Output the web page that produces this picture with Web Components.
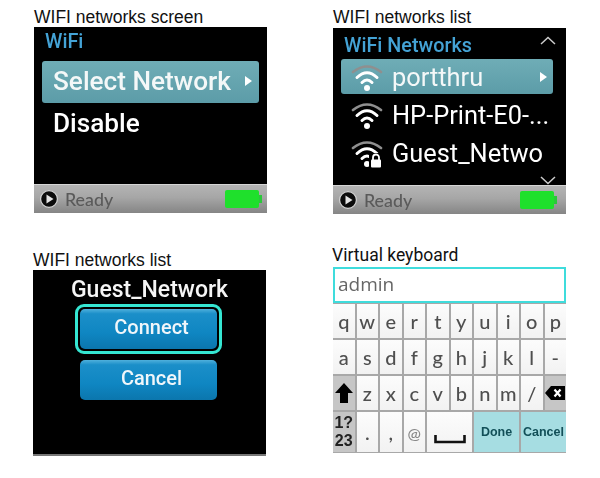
<!DOCTYPE html>
<html>
<head>
<meta charset="utf-8">
<title>WiFi screens</title>
<style>
    html, body { margin: 0; background: #fff; }
    body { width: 600px; height: 478px; overflow: hidden; font-family: "Liberation Sans", sans-serif; }
    .page {
        display: grid;
        grid-template-columns: 233px 233px;
        column-gap: 67px;
        padding-left: 33px;
    }
</style>
</head>
<body>
<div class="page">
    <shot-panel label="WIFI networks screen" style="--top: 7px; --label-h: 20px; --x: 1px">
        <wifi-screen heading="WiFi" style="--head: 34px; --head-lh: 30px; --head-pad: 3px; --pad-r: 8px; --batt-r: 4px; margin: 0 -1px 0 1px">
            <menu-row size="big" arrow>Select Network</menu-row>
            <menu-row size="big" plain>Disable</menu-row>
        </wifi-screen>
    </shot-panel>
    <shot-panel label="WIFI networks list" style="--top: 7px; --label-h: 21px">
        <wifi-screen heading="WiFi Networks" scroll style="--head: 31px; --head-lh: 36px; --head-pad: 3px; --pad-r: 13px; --batt-r: 8px">
            <menu-row arrow><wifi-icon slot="icon"></wifi-icon>portthru</menu-row>
            <menu-row plain><wifi-icon slot="icon"></wifi-icon>HP-Print-E0-...</menu-row>
            <menu-row plain><wifi-icon slot="icon" locked></wifi-icon>Guest_Netwo</menu-row>
        </wifi-screen>
    </shot-panel>
    <shot-panel label="WIFI networks list" style="--top: 7px; --label-h: 20px">
        <connect-dialog network="Guest_Network"></connect-dialog>
    </shot-panel>
    <shot-panel label="Virtual keyboard" style="--top: 0px; --label-h: 24px; --label-font: Roboto; --x: -1px">
        <virtual-keyboard value="admin"></virtual-keyboard>
    </shot-panel>
</div>

<script>
class ShotPanel extends HTMLElement {
    constructor() {
        super();
        this.shadow = this.attachShadow({mode: "open"});
        this.shadow.innerHTML = `
        <style>
            :host { display: block; padding-top: var(--top, 0); height: 243px; box-sizing: border-box; }
            .label {
                height: var(--label-h, 20px);
                font: 17.5px/var(--label-h, 20px) var(--label-font, "Liberation Sans"), sans-serif;
                color: #111;
                margin-left: var(--x, 0);
                white-space: nowrap;
            }
        </style>
        <div class="label"></div>
        <slot></slot>`;
    }
    connectedCallback() {
        this.shadow.querySelector('.label').textContent = this.getAttribute('label');
    }
}

class WifiScreen extends HTMLElement {
    constructor() {
        super();
        this.shadow = this.attachShadow({mode: "open"});
        this.shadow.innerHTML = `
        <style>
            :host { display: flex; flex-direction: column; height: 186px; background: #000; position: relative; overflow: hidden; }
            .main { flex: 1; padding: 0 var(--pad-r, 12px) 0 8px; filter: blur(.4px); }
            h1 {
                margin: 0;
                height: var(--head, 32px);
                font: 500 19.8px/var(--head-lh, 36px) "Roboto", sans-serif;
                color: #44a3d6;
                padding-left: var(--head-pad, 3px);
            }
            .chev { position: absolute; right: 10px; width: 16px; height: 9px; display: none; }
            :host([scroll]) .chev { display: block; }
            .up { top: 8px; }
            .down { top: 148px; }
        </style>
        <div class="main">
            <h1></h1>
            <slot></slot>
        </div>
        <svg class="chev up" viewBox="0 0 16 9"><path d="M1 8L8 1.5L15 8" fill="none" stroke="#ccc" stroke-width="1.5"/></svg>
        <svg class="chev down" viewBox="0 0 16 9"><path d="M1 1L8 7.5L15 1" fill="none" stroke="#ccc" stroke-width="1.5"/></svg>
        <status-bar></status-bar>`;
    }
    connectedCallback() {
        this.shadow.querySelector('h1').textContent = this.getAttribute('heading');
    }
}

class MenuRow extends HTMLElement {
    constructor() {
        super();
        this.shadow = this.attachShadow({mode: "open"});
        this.shadow.innerHTML = `
        <style>
            :host {
                display: flex;
                align-items: center;
                gap: 9px;
                height: 35px;
                padding: 0 6px 0 10px;
                margin-bottom: 3px;
                background: linear-gradient(#6fadb6, #5c9ca8);
                border-radius: 3px;
                color: #f4f8f8;
                font: 25.4px "Roboto", sans-serif;
                white-space: nowrap;
                position: relative;
            }
            :host([plain]) { background: none; color: #fff; }
            :host([size="big"]) { height: 42px; box-sizing: border-box; font-size: 26.2px; font-weight: 500; padding: 0 7px 2px 11px; margin-bottom: 0; }
            .text { flex: 1; }
            .arrow { display: none; width: 0; height: 0; border-left: 7px solid #fff; border-top: 5px solid transparent; border-bottom: 5px solid transparent; }
            :host([arrow]) .arrow { display: block; }
        </style>
        <slot name="icon"></slot>
        <span class="text"><slot></slot></span>
        <span class="arrow"></span>`;
    }
}

class WifiIcon extends HTMLElement {
    constructor() {
        super();
        this.shadow = this.attachShadow({mode: "open"});
        this.shadow.innerHTML = `
        <style>
            :host { display: block; width: 32px; height: 30px; flex: none; }
            svg { display: block; }
        </style>
        <svg width="32" height="30" viewBox="0 0 32 30" fill="none" stroke-linecap="round">
            <path d="M2 10Q16 -1 30 10" stroke="#8f8f8f" stroke-width="2.6"/>
            <path d="M6 15.5Q16 6 26 15.5" stroke="#fff" stroke-width="3"/>
            <path d="M11 20.5Q16 15.5 21 20.5" stroke="#fff" stroke-width="3"/>
            <circle cx="16" cy="26" r="3" fill="#fff"/>
            <g class="lock" display="none">
                <rect x="18" y="15" width="14" height="16" fill="#000"/>
                <path d="M22 22v-2.5a3 3 0 0 1 6 0V22" stroke="#fff" stroke-width="1.8"/>
                <rect x="20" y="21.5" width="10" height="8" rx="1" fill="#fff"/>
            </g>
        </svg>`;
    }
    connectedCallback() {
        if (this.hasAttribute('locked')) {
            this.shadow.querySelector('.lock').setAttribute('display', 'inline');
        }
    }
}

class StatusBar extends HTMLElement {
    constructor() {
        super();
        this.shadow = this.attachShadow({mode: "open"});
        this.shadow.innerHTML = `
        <style>
            :host {
                display: flex;
                align-items: center;
                height: 29px;
                box-sizing: border-box;
                padding: 0 var(--batt-r, 7px) 0 5px;
                border-top: 1px solid #d5d5d5;
                background: linear-gradient(#b4b4b4, #a6a6a6 45%, #858585);
                filter: blur(.4px);
            }
            .text { flex: 1; margin-left: 6px; font: 500 17.8px "Lato", sans-serif; color: #5a5a5a; }
        </style>
        <svg width="20" height="20" viewBox="0 0 20 20">
            <circle cx="10" cy="10" r="8.4" fill="#0c0c0c" stroke="#d6d6d6" stroke-width="1.2"/>
            <path d="M7.5 5.6L14.5 10L7.5 14.4Z" fill="#e4e4e4"/>
        </svg>
        <span class="text">Ready</span>
        <svg width="38" height="20" viewBox="0 0 38 20">
            <rect x="0" y="1" width="34" height="18" rx="2" fill="#1fe02c"/>
            <rect x="34" y="6" width="3" height="8" fill="#2bc83a"/>
        </svg>`;
    }
}

class ConnectDialog extends HTMLElement {
    constructor() {
        super();
        this.shadow = this.attachShadow({mode: "open"});
        this.shadow.innerHTML = `
        <style>
            :host {
                display: flex;
                flex-direction: column;
                align-items: center;
                height: 186px;
                box-sizing: border-box;
                background: #000;
                border-bottom: 2px solid #777;
            }
            .name {
                height: 34px;
                font: 500 23px/40px "Roboto", sans-serif;
                color: #f5f5f5;
                filter: blur(.4px);
            }
            .stack { display: flex; flex-direction: column; align-items: center; gap: 6px; }
        </style>
        <div class="name"></div>
        <div class="stack">
            <glossy-button focused>Connect</glossy-button>
            <glossy-button>Cancel</glossy-button>
        </div>`;
    }
    connectedCallback() {
        this.shadow.querySelector('.name').textContent = this.getAttribute('network');
    }
}

class GlossyButton extends HTMLElement {
    constructor() {
        super();
        this.shadow = this.attachShadow({mode: "open"});
        this.shadow.innerHTML = `
        <style>
            :host { display: block; padding: 0; border-radius: 7px; margin-right: 2px; }
            :host([focused]) { padding: 2px; border: 3px solid #35e6d2; background: #000; border-radius: 9px; }
            .face {
                box-sizing: border-box;
                width: 137px;
                height: 40px;
                padding-left: 6px;
                border-radius: 5px;
                background: linear-gradient(#4fb0dc 0, #1b8fc9 12%, #0f86c2 60%, #0b76ad);
                color: #f0f6fa;
                font: 500 20px/37px "Roboto", sans-serif;
                text-align: center;
                filter: blur(.4px);
            }
        </style>
        <div class="face"><slot></slot></div>`;
    }
}

class KbKey extends HTMLElement {
    constructor() {
        super();
        this.shadow = this.attachShadow({mode: "open"});
        this.shadow.innerHTML = `
        <style>
            :host {
                display: flex;
                align-items: center;
                justify-content: center;
                background: linear-gradient(#fcfcfc, #f2f2f2);
                color: #4f4f4f;
                font: 500 20px "Lato", sans-serif;
                min-width: 0;
                overflow: hidden;
            }
            :host([wide]) { grid-column: span 2; }
            :host([mod]) { background: #c6c6c6; color: #000; }
            :host([action]) {
                background: #a6dde2;
                color: #124f58;
                font: bold 12.5px "Liberation Sans", sans-serif;
            }
        </style>
        <slot></slot>`;
    }
}

class VirtualKeyboard extends HTMLElement {
    constructor() {
        super();
        this.shadow = this.attachShadow({mode: "open"});
        const letters = (s) => [...s].map(c => `<kb-key>${c}</kb-key>`).join('');
        this.shadow.innerHTML = `
        <style>
            :host { display: block; height: 186px; filter: blur(.4px); }
            .field {
                height: 36px;
                box-sizing: border-box;
                border: 2px solid #3fdcdc;
                padding-left: 3px;
                font: 19px/30px "Open Sans", sans-serif;
                color: #666;
            }
            .keys {
                display: grid;
                grid-template-columns: repeat(10, 1fr);
                grid-template-rows: 34px 34px 34px 40px;
                gap: 2px;
                height: 150px;
                box-sizing: border-box;
                padding: 1px 0 2px;
                background: #a8a8a8;
            }
            .stack { font: bold 16px/18px "Liberation Sans", sans-serif; color: #222; text-align: center; }
            .at { font-size: 16px; color: #888; }
            .space { margin-top: 13px; }
        </style>
        <div class="field"></div>
        <div class="keys">
            ${letters('qwertyuiop')}
            ${letters('asdfghjkl-')}
            <kb-key mod><svg width="20" height="22" viewBox="0 0 20 22"><path d="M10 1L19 11H14V21H6V11H1Z" fill="#000"/></svg></kb-key>
            ${letters('zxcvbnm/')}
            <kb-key mod><svg width="20" height="14" viewBox="0 0 20 14"><path d="M6 0H20V14H6L0 7Z" fill="#000"/><path d="M9.5 3.5L15.5 10.5M15.5 3.5L9.5 10.5" stroke="#fff" stroke-width="2.2"/></svg></kb-key>
            <kb-key mod><span class="stack">1?<br>23</span></kb-key>
            ${letters('.,')}
            <kb-key><span class="at">@</span></kb-key>
            <kb-key wide><svg class="space" width="32" height="10" viewBox="0 0 32 10"><path d="M1.5 1V8H30.5V1" fill="none" stroke="#111" stroke-width="2.6"/></svg></kb-key>
            <kb-key wide action>Done</kb-key>
            <kb-key wide action>Cancel</kb-key>
        </div>`;
    }
    connectedCallback() {
        this.shadow.querySelector('.field').textContent = this.getAttribute('value');
    }
}

window.customElements.define('shot-panel', ShotPanel);
window.customElements.define('wifi-screen', WifiScreen);
window.customElements.define('menu-row', MenuRow);
window.customElements.define('wifi-icon', WifiIcon);
window.customElements.define('status-bar', StatusBar);
window.customElements.define('connect-dialog', ConnectDialog);
window.customElements.define('glossy-button', GlossyButton);
window.customElements.define('kb-key', KbKey);
window.customElements.define('virtual-keyboard', VirtualKeyboard);
</script>
</body>
</html>
